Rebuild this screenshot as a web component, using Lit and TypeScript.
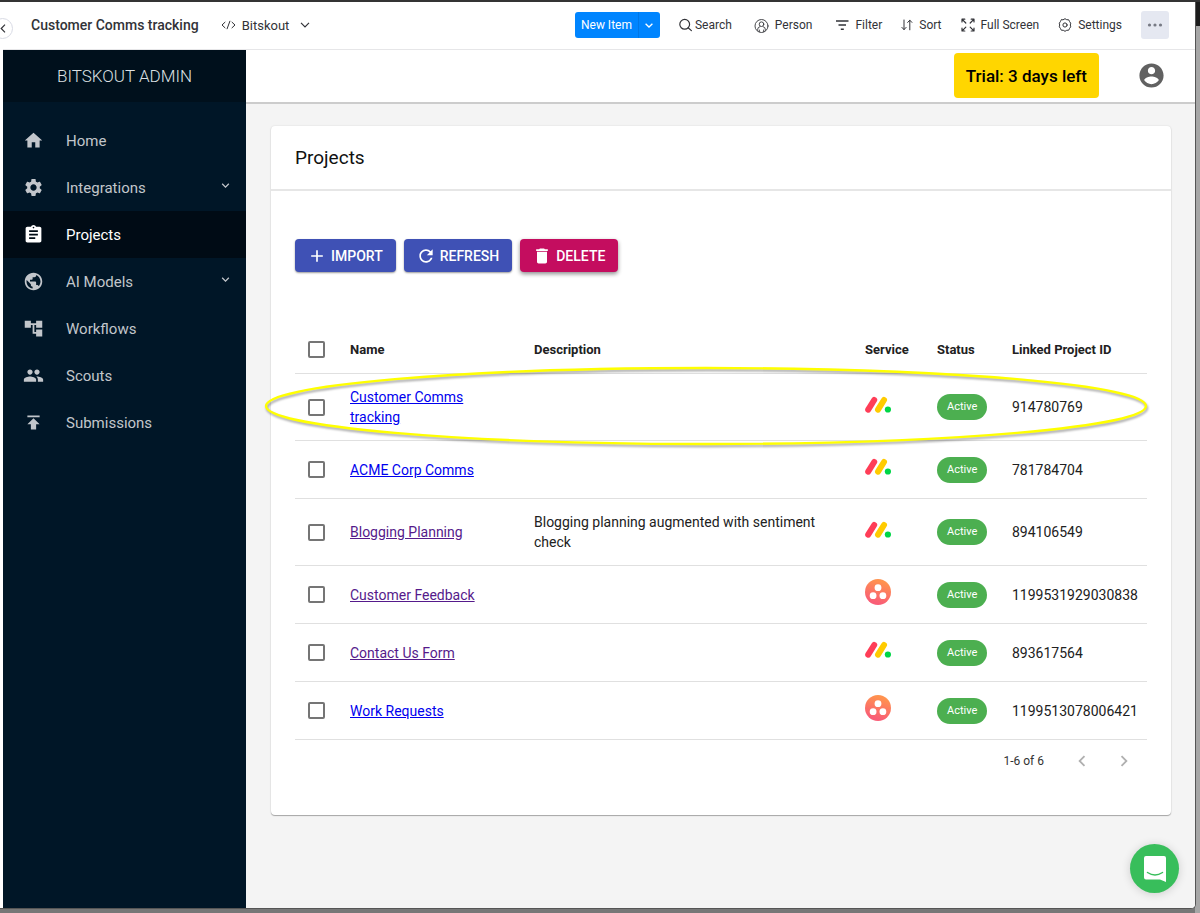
import { LitElement, html, css, svg, nothing } from "lit";
import { customElement, property } from "lit/decorators.js";
import { classMap } from "lit/directives/class-map.js";

const ICONS: Record<string, string> = {
  home: "M10 20v-6h4v6h5v-8h3L12 3 2 12h3v8z",
  settings:
    "M19.14 12.94c.04-.3.06-.61.06-.94 0-.32-.02-.64-.07-.94l2.03-1.58c.18-.14.23-.41.12-.61l-1.92-3.32c-.12-.22-.37-.29-.59-.22l-2.39.96c-.5-.38-1.03-.7-1.62-.94l-.36-2.54c-.04-.24-.24-.41-.48-.41h-3.84c-.24 0-.43.17-.47.41l-.36 2.54c-.59.24-1.13.57-1.62.94l-2.39-.96c-.22-.08-.47 0-.59.22L2.74 8.87c-.12.21-.08.47.12.61l2.03 1.58c-.05.3-.09.63-.09.94s.02.64.07.94l-2.03 1.58c-.18.14-.23.41-.12.61l1.92 3.32c.12.22.37.29.59.22l2.39-.96c.5.38 1.03.7 1.62.94l.36 2.54c.05.24.24.41.48.41h3.84c.24 0 .44-.17.47-.41l.36-2.54c.59-.24 1.13-.56 1.62-.94l2.39.96c.22.08.47 0 .59-.22l1.92-3.32c.12-.22.07-.47-.12-.61l-2.01-1.58zM12 15.6c-1.98 0-3.6-1.62-3.6-3.6s1.62-3.6 3.6-3.6 3.6 1.62 3.6 3.6-1.62 3.6-3.6 3.6z",
  assignment:
    "M19 3h-4.18C14.4 1.84 13.3 1 12 1c-1.3 0-2.4.84-2.82 2H5c-1.1 0-2 .9-2 2v14c0 1.1.9 2 2 2h14c1.1 0 2-.9 2-2V5c0-1.1-.9-2-2-2zm-7 0c.55 0 1 .45 1 1s-.45 1-1 1-1-.45-1-1 .45-1 1-1zm2 14H7v-2h7v2zm3-4H7v-2h10v2zm0-4H7V7h10v2z",
  globe:
    "M12 2C6.48 2 2 6.48 2 12s4.48 10 10 10 10-4.48 10-10S17.52 2 12 2zm-1 17.93c-3.95-.49-7-3.85-7-7.93 0-.62.08-1.21.21-1.79L9 15v1c0 1.1.9 2 2 2v1.93zm6.9-2.54c-.26-.81-1-1.39-1.9-1.39h-1v-3c0-.55-.45-1-1-1H8v-2h2c.55 0 1-.45 1-1V7h2c1.1 0 2-.9 2-2v-.41c2.93 1.19 5 4.06 5 7.41 0 2.08-.8 3.97-2.1 5.39z",
  tree: "M22 11V3h-7v3H9V3H2v8h7V8h2v10h4v3h7v-8h-7v3h-2V8h2v3z",
  people:
    "M16 11c1.66 0 2.99-1.34 2.99-3S17.66 5 16 5c-1.66 0-3 1.34-3 3s1.34 3 3 3zm-8 0c1.66 0 2.99-1.34 2.99-3S9.66 5 8 5C6.34 5 5 6.34 5 8s1.34 3 3 3zm0 2c-2.33 0-7 1.17-7 3.5V19h14v-2.5c0-2.33-4.67-3.5-7-3.5zm8 0c-.29 0-.62.02-.97.05 1.16.84 1.97 1.97 1.97 3.45V19h6v-2.5c0-2.33-4.67-3.5-7-3.5z",
  publish: "M5 4v2h14V4H5zm0 10h4v6h6v-6h4l-7-7-7 7z",
  add: "M19 13h-6v6h-2v-6H5v-2h6V5h2v6h6v2z",
  refresh:
    "M17.65 6.35C16.2 4.9 14.21 4 12 4c-4.42 0-7.99 3.58-7.99 8s3.57 8 7.99 8c3.73 0 6.84-2.55 7.73-6h-2.08c-.82 2.33-3.04 4-5.65 4-3.31 0-6-2.69-6-6s2.69-6 6-6c1.66 0 3.14.69 4.22 1.78L13 11h7V4l-2.35 2.35z",
  delete: "M6 19c0 1.1.9 2 2 2h8c1.1 0 2-.9 2-2V7H6v12zM19 4h-3.5l-1-1h-5l-1 1H5v2h14V4z",
  account:
    "M12 2C6.48 2 2 6.48 2 12s4.48 10 10 10 10-4.48 10-10S17.52 2 12 2zm0 3c1.66 0 3 1.34 3 3s-1.34 3-3 3-3-1.34-3-3 1.34-3 3-3zm0 14.2c-2.5 0-4.71-1.28-6-3.22.03-1.99 4-3.08 6-3.08 1.99 0 5.97 1.09 6 3.08-1.29 1.94-3.5 3.22-6 3.22z",
  left: "M15.41 7.41L14 6l-6 6 6 6 1.41-1.41L10.83 12z",
  right: "M10 6L8.59 7.41 13.17 12l-4.58 4.59L10 18l6-6z",
  down: "M7.41 8.59L12 13.17l4.59-4.58L18 10l-6 6-6-6z",
};

const icon = (name: string, size: number) => html`<svg
  class="icon" width=${size} height=${size} viewBox="0 0 24 24" fill="currentColor" aria-hidden="true"
><path d=${ICONS[name]}></path></svg>`;

const outline = (width: number, body: unknown) => html`<svg
  class="icon" width=${width} height="16" viewBox=${`0 0 ${width} 16`}
  fill="none" stroke="currentColor" stroke-linecap="round" stroke-linejoin="round" aria-hidden="true"
>${body}</svg>`;

const TOOLS = [
  { label: "Search", tight: true, art: outline(13, svg`<circle cx="5.7" cy="7.3" r="4.9" stroke-width="1.2"></circle><path stroke-width="1.2" d="M9.4 11L12.4 13.6"></path>`) },
  { label: "Person", art: outline(18, svg`<circle cx="10.5" cy="9" r="6.5" stroke-width=".9"></circle><circle cx="10.5" cy="7.2" r="2.3" stroke-width=".9"></circle><path stroke-width=".9" d="M6.6 13.2v-.6q0-2.5 2.3-3M14.4 13.2v-.6q0-2.5-2.3-3M8.3 14.6v-1.6M12.7 14.6v-1.6"></path>`) },
  { label: "Filter", art: outline(18, svg`<path stroke-width="1.5" stroke-linecap="butt" d="M5 4h12.5M7.5 8h7.5M9.8 12.2h3"></path>`) },
  { label: "Sort", art: outline(12, svg`<path d="M3 3v9.5M.9 10.4L3 12.6l2.1-2.2M8.8 12.8V3.3M6.7 5.4l2.1-2.2 2.1 2.2"></path>`) },
  { label: "Full Screen", art: outline(14, svg`<path stroke-width="1.2" d="M1 5V2.2h2.8M1.2 2.4l3.6 3.6M13 5V2.2h-2.8M12.8 2.4L9.2 6M1 11.2V14h2.8M1.2 13.8l3.6-3.6M13 11.2V14h-2.8M12.8 13.8l-3.6-3.6"></path>`) },
  { label: "Settings", art: outline(14, svg`<circle cx="7" cy="8" r="2.1"></circle><path d="M5.300 2.700L7 1.700l1.700 1 2 .1.900 1.800 1.100 1.600-.4 1.800.4 1.800-1.100 1.600-.9 1.800-2 .1-1.700 1-1.700-1-2-.1-.9-1.800-1.100-1.600.4-1.800-.4-1.800 1.100-1.600.9-1.800z"></path>`) },
];

const NAV = [
  { label: "Home", icon: "home" },
  { label: "Integrations", icon: "settings", expandable: true },
  { label: "Projects", icon: "assignment", active: true },
  { label: "AI Models", icon: "globe", expandable: true },
  { label: "Workflows", icon: "tree" },
  { label: "Scouts", icon: "people" },
  { label: "Submissions", icon: "publish" },
];

const PROJECTS = [
  { name: "Customer Comms tracking", description: "", service: "monday", id: "914780769", tall: true },
  { name: "ACME Corp Comms", description: "", service: "monday", id: "781784704" },
  { name: "Blogging Planning", description: "Blogging planning augmented with sentiment check", service: "monday", id: "894106549", tall: true, visited: true },
  { name: "Customer Feedback", description: "", service: "asana", id: "1199531929030838", visited: true },
  { name: "Contact Us Form", description: "", service: "monday", id: "893617564", visited: true },
  { name: "Work Requests", description: "", service: "asana", id: "1199513078006421" },
];

const reset = css`
  * { box-sizing: border-box; }
  button { font: inherit; color: inherit; border: 0; background: none; padding: 0; cursor: pointer; }
  a { color: inherit; text-decoration: none; }
  .icon { display: block; flex: none; }
`;

@customElement("board-bar")
class BoardBar extends LitElement {
  static styles = [reset, css`
    :host { display: flex; align-items: center; height: 48px; padding: 0 26px 1px 28px; border-bottom: 1px solid #e6e6e8; background: #fff; color: #323338; font-size: 12px; }
    .title { margin: 0; font-size: 14px; font-weight: 500; white-space: nowrap; }
    .view { display: flex; align-items: center; gap: 6px; margin-left: 22px; font-size: 13px; }
    .view .caret { margin-left: 5px; }
    .tools { display: flex; align-items: center; gap: 19px; margin-left: auto; }
    .split { display: flex; height: 26px; border-radius: 3px; background: #0085ff; color: #fff; overflow: hidden; }
    .split .main { padding: 0 6px; }
    .split .more { display: grid; place-items: center; width: 22px; border-left: 1px solid #0077e6; }
    .tool { display: flex; align-items: center; gap: 6px; white-space: nowrap; }
    .tool.tight { gap: 3px; }
    .dots { display: grid; place-items: center; width: 28px; height: 28px; border-radius: 3px; background: #e5e8f1; color: #777a84; }
  `];

  render() {
    return html`
      <h1 class="title">Customer Comms tracking</h1>
      <button class="view">
        ${outline(15, svg`<path d="M4 5.200L1 8l3 2.800M11 5.200L14 8l-3 2.800M8.900 4.200L6.100 11.800"></path>`)}
        <span>Bitskout</span>
        <svg class="icon caret" width="10" height="6" viewBox="0 0 10 6" fill="none" stroke="currentColor" stroke-width="1.2" aria-hidden="true"><path d="M1 .8l4 4 4-4"></path></svg>
      </button>
      <div class="tools">
        <div class="split">
          <button class="main">New Item</button>
          <button class="more" aria-label="More item types">
            <svg class="icon" width="8" height="5" viewBox="0 0 8 5" fill="none" stroke="currentColor" stroke-width="1.3" aria-hidden="true"><path d="M.6 .7L4 4 7.400 .7"></path></svg>
          </button>
        </div>
        ${TOOLS.map((t) => html`<button class=${classMap({ tool: true, tight: !!t.tight })}>${t.art}<span>${t.label}</span></button>`)}
        <button class="dots" aria-label="More options">
          <svg class="icon" width="16" height="4" viewBox="0 0 16 4" fill="currentColor" aria-hidden="true"><circle cx="2.500" cy="2" r="1.600"></circle><circle cx="8" cy="2" r="1.600"></circle><circle cx="13.500" cy="2" r="1.600"></circle></svg>
        </button>
      </div>
    `;
  }
}

@customElement("side-nav")
class SideNav extends LitElement {
  static styles = [reset, css`
    :host { display: block; flex: none; width: 243px; background: #001627; color: #c2c6cb; }
    .brand { display: flex; align-items: center; justify-content: center; height: 52px; background: #00101c; color: #dde0e3; font-size: 17px; font-weight: 300; }
    .list { list-style: none; margin: 0; padding: 15px 0 0; }
    .item { display: flex; align-items: center; height: 47px; padding: 0 13px 0 20px; font-size: 15px; }
    .item.active { background: #000b15; color: #fff; }
    .label { flex: 1; margin-left: 22px; }
    .expand { padding-bottom: 5px; }
  `];

  render() {
    return html`
      <div class="brand">BITSKOUT ADMIN</div>
      <nav>
        <ul class="list">
          ${NAV.map((n) => html`<li>
            <a class=${classMap({ item: true, active: !!n.active })} href="#">
              ${icon(n.icon, 21)}
              <span class="label">${n.label}</span>
              ${n.expandable ? html`<span class="expand">${icon("down", 15)}</span>` : nothing}
            </a>
          </li>`)}
        </ul>
      </nav>
    `;
  }
}

@customElement("service-logo")
class ServiceLogo extends LitElement {
  @property() name = "monday";

  static styles = css`
    :host { display: inline; }
    .asana { stop-color: #ff924f; }
    .asana-end { stop-color: #f95d76; }
  `;

  render() {
    return this.name === "monday"
      ? html`<svg width="26" height="26" viewBox="0 0 26 26" role="img" aria-label="monday.com" fill="none" stroke-linecap="round" stroke-width="6">
          <path stroke="#ff3d57" d="M3.200 17.700L9.200 8"></path>
          <path stroke="#ffcb00" d="M13 17.700L19 8"></path>
          <circle cx="22.900" cy="17.500" r="3.100" fill="#00d647" stroke-width="0"></circle>
        </svg>`
      : html`<svg width="26" height="26" viewBox="0 0 26 26" role="img" aria-label="Asana">
          <defs><linearGradient id="g" x1=".65" y1="0" x2=".35" y2="1"><stop class="asana" offset=".1"></stop><stop class="asana-end" offset=".9"></stop></linearGradient></defs>
          <circle cx="13" cy="13" r="13" fill="url(#g)"></circle>
          <g fill="#fff"><circle cx="13" cy="8.700" r="3.400"></circle><circle cx="8.100" cy="16.700" r="3.400"></circle><circle cx="17.900" cy="16.700" r="3.400"></circle></g>
        </svg>`;
  }
}

@customElement("projects-table")
class ProjectsTable extends LitElement {
  static styles = [reset, css`
    :host { display: block; position: relative; font-size: 14px; line-height: 20px; color: #212121; }
    .table { width: 100%; table-layout: fixed; border-collapse: separate; border-spacing: 0; }
    .c-check { width: 43px; }
    .c-name { width: 184px; }
    .c-service { width: 72px; }
    .c-status { width: 75px; }
    .c-id { width: 147px; }
    th, td { padding: 0 0 0 12px; border-bottom: 1px solid #e0e0e0; text-align: left; vertical-align: middle; }
    th { height: 48px; font-size: 13px; font-weight: 700; }
    td { height: 58px; }
    .tall td { height: 67px; }
    .wrap { padding-right: 24px; }
    .check { appearance: none; display: block; width: 17px; height: 17px; margin: 0 0 0 1px; border: 2px solid #757575; border-radius: 2px; background: #fff; }
    .link { color: #0000ee; text-decoration: underline; }
    .link.visited { color: #551a8b; }
    .chip { display: inline-flex; align-items: center; height: 26px; padding: 0 10px; border-radius: 13px; background: #4caf50; color: #fff; font-size: 11px; vertical-align: middle; }
    .pager { display: flex; align-items: center; justify-content: flex-end; height: 42px; padding-right: 12px; font-size: 12px; color: #333; }
    .pager .arrows { display: flex; gap: 20px; margin-left: 27px; color: #b0b0b0; }
    .mark { position: absolute; left: -31px; top: 39px; width: calc(100% + 32px); height: 82px; overflow: visible; pointer-events: none; filter: drop-shadow(1px 2px 1px rgba(0, 0, 0, 0.35)); }
  `];

  render() {
    return html`
      <table class="table">
        <colgroup>
          <col class="c-check" /><col class="c-name" /><col /><col class="c-service" /><col class="c-status" /><col class="c-id" />
        </colgroup>
        <thead>
          <tr>
            <th><input class="check" type="checkbox" aria-label="Select all projects" /></th>
            <th>Name</th><th>Description</th><th>Service</th><th>Status</th><th>Linked Project ID</th>
          </tr>
        </thead>
        <tbody>
          ${PROJECTS.map((p) => html`<tr class=${classMap({ tall: !!p.tall })}>
            <td><input class="check" type="checkbox" aria-label=${`Select ${p.name}`} /></td>
            <td class="wrap"><a class=${classMap({ link: true, visited: !!p.visited })} href="#">${p.name}</a></td>
            <td class="wrap">${p.description}</td>
            <td><service-logo name=${p.service}></service-logo></td>
            <td><span class="chip">Active</span></td>
            <td>${p.id}</td>
          </tr>`)}
        </tbody>
      </table>
      <div class="pager">
        <span>1-6 of 6</span>
        <span class="arrows">
          <button aria-label="Previous page">${icon("left", 22)}</button>
          <button aria-label="Next page">${icon("right", 22)}</button>
        </span>
      </div>
      <svg class="mark" viewBox="0 0 884 82" preserveAspectRatio="none" aria-hidden="true">
        <ellipse cx="442" cy="41" rx="440" ry="38" fill="none" stroke="#ffff00" stroke-width="2.400" vector-effect="non-scaling-stroke"></ellipse>
      </svg>
    `;
  }
}

@customElement("app-root")
class AppRoot extends LitElement {
  static styles = [reset, css`
    :host { display: flex; min-height: 100vh; padding: 2px 0 4px; background: linear-gradient(#343434 2px, transparent 2px), linear-gradient(#1c1c1c, #1c1c1c) right top / 5px 26px no-repeat, linear-gradient(to right, #777 calc(100% - 5px), #a6a6a6 calc(100% - 5px)); font-family: Roboto, "Liberation Sans", sans-serif; color: #111; box-sizing: border-box; }
    .window { position: relative; flex: 1; display: flex; flex-direction: column; margin-right: 4px; padding-left: 3px; border-right: 1px solid #555; border-bottom: 1px solid #555; border-bottom-right-radius: 5px; background: #fff; overflow: hidden; }
    .collapse { position: absolute; left: -8px; top: 16px; display: flex; align-items: center; justify-content: flex-end; width: 21px; height: 21px; padding-right: 6px; border: 1px solid #d8dae4; border-radius: 50%; background: #fff; color: #323338; }
    .body { flex: 1; display: flex; }
    .main { flex: 1; display: flex; flex-direction: column; min-width: 0; background: #f4f4f4; }
    .topbar { display: flex; align-items: center; justify-content: flex-end; gap: 38px; height: 54px; padding: 0 29px 1px 24px; border-bottom: 2px solid #ccc; background: #fff; }
    .trial { display: flex; align-items: center; height: 45px; padding: 0 12px; border-radius: 4px; background: #ffd600; color: #000; font-size: 17px; font-weight: 500; }
    .account { color: #616161; }
    .card { margin: 22px 24px 24px 25px; border-radius: 4px; background: #fff; box-shadow: 0 1px 1px rgba(0, 0, 0, 0.3), 0 0 2px rgba(0, 0, 0, 0.12); }
    .head { display: flex; align-items: center; height: 65px; padding: 0 24px; border-bottom: 2px solid #e6e6e6; }
    .heading { margin: 0; font-size: 19px; font-weight: 400; }
    .content { padding: 48px 24px 33px; }
    .actions { display: flex; gap: 8px; margin-bottom: 54px; }
    .action { display: flex; align-items: center; gap: 4px; height: 33px; padding: 0 13px 0 12px; border-radius: 4px; background: #3f51b5; color: #fff; font-size: 14px; font-weight: 500; box-shadow: 0 1px 2px rgba(0, 0, 0, 0.4); }
    .action.danger { background: #c40d5f; box-shadow: 0 2px 4px rgba(0, 0, 0, 0.45); }
    .chat { position: absolute; right: 16px; bottom: 15px; display: grid; place-items: center; width: 49px; height: 49px; border-radius: 50%; background: #38be5b; box-shadow: 0 1px 10px rgba(0, 0, 0, 0.16); }
  `];

  render() {
    return html`
      <div class="window">
        <board-bar></board-bar>
        <button class="collapse" aria-label="Collapse panel">
          <svg class="icon" width="6" height="9" viewBox="0 0 6 9" fill="none" stroke="currentColor" stroke-width="1.200" aria-hidden="true"><path d="M5 .7L1.200 4.500 5 8.300"></path></svg>
        </button>
        <div class="body">
          <side-nav></side-nav>
          <main class="main">
            <div class="topbar">
              <span class="trial">Trial: 3 days left</span>
              <button class="account" aria-label="Account">${icon("account", 29)}</button>
            </div>
            <section class="card">
              <header class="head"><h2 class="heading">Projects</h2></header>
              <div class="content">
                <div class="actions">
                  <button class="action">${icon("add", 20)}IMPORT</button>
                  <button class="action">${icon("refresh", 20)}REFRESH</button>
                  <button class="action danger">${icon("delete", 20)}DELETE</button>
                </div>
                <projects-table></projects-table>
              </div>
            </section>
          </main>
        </div>
        <button class="chat" aria-label="Open chat">
          <svg class="icon" width="24" height="28" viewBox="0 0 24 28" aria-hidden="true">
            <path fill="#fff" d="M3 1h18q2 0 2 2v24l-6-2.500H3q-2 0-2-2V3q0-2 2-2z"></path>
            <path fill="none" stroke="#38be5b" stroke-width="1.500" stroke-linecap="round" d="M4.500 17.500q7.500 5 15 0"></path>
          </svg>
        </button>
      </div>
    `;
  }
}
